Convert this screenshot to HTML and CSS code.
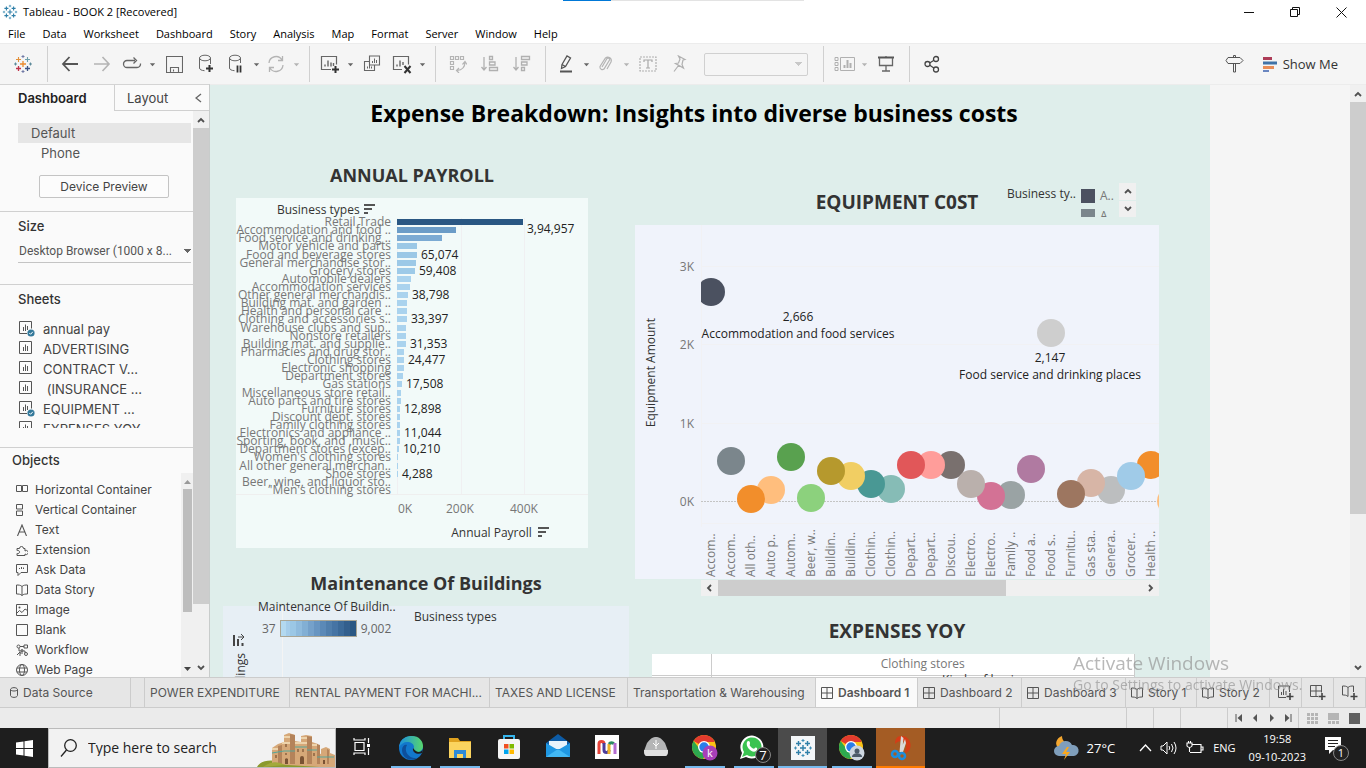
FILE: index.html
```html
<!DOCTYPE html>
<html lang="en">
<head>
<meta charset="utf-8">
<title>Tableau - BOOK 2 [Recovered]</title>
<link rel="stylesheet" href="styles.css">
</head>
<body>
<svg class="defs" aria-hidden="true">
  <symbol id="caret" viewBox="0 0 8 5"><path d="M1 1h6L4 4.500z" fill="currentColor"/></symbol>
  <symbol id="logo" viewBox="0 0 20 20">
    <path d="M10 7v6M7 10h6" stroke="#eb8a2d" stroke-width="1.300"/>
    <path d="M5.500 3v5M3 5.500h5" stroke="#e2903a" stroke-width="1.100"/><path d="M14.500 3v5M12 5.500h5" stroke="#6fa0aa" stroke-width="1.100"/>
    <path d="M5.500 12v5M3 14.500h5" stroke="#c0344b" stroke-width="1.300"/><path d="M14.500 12v5M12 14.500h5" stroke="#3e5484" stroke-width="1.300"/>
    <path d="M10 1v3M8.500 2.500h3M10 16v3M8.500 17.500h3" stroke="#7079a5"/><path d="M2.500 8.500v3M1 10h3M17.500 8.500v3M16 10h3" stroke="#5c8a9a"/>
  </symbol>
  <symbol id="logo-blue" viewBox="0 0 20 20">
    <path d="M10 7v6M7 10h6M5.500 3v5M3 5.500h5M14.500 3v5M12 5.500h5M5.500 12v5M3 14.500h5M14.500 12v5M12 14.500h5" stroke="#2f7fa8" stroke-width="1.400"/>
    <path d="M10 1v3M8.500 2.500h3M10 16v3M8.500 17.500h3M2.500 8.500v3M1 10h3M17.500 8.500v3M16 10h3" stroke="#3f8fb5"/>
  </symbol>
  <symbol id="sheet" viewBox="0 0 16 16"><path d="M.5 .5h12v12h-12zM4.500 6v4M6.500 3.500v6.500M8.500 5v5" fill="none" stroke="#555"/></symbol>
  <symbol id="sheet-used" viewBox="0 0 16 16"><path d="M8 12.500H.5V.5h12v7M4.500 6v4M6.500 3.500v6.500M8.500 5v4" fill="none" stroke="#555"/><circle cx="12" cy="12" r="3.600" fill="#33789a"/><path d="M10.300 12l1.300 1.300 2.200-2.500" fill="none" stroke="#fff"/></symbol>
  <symbol id="dash" viewBox="0 0 12 12"><path d="M.5 .5h11v11h-11zM.5 6h11M6 .5v11" fill="none" stroke="#555"/></symbol>
  <symbol id="book" viewBox="0 0 12 12"><path d="M6 2.500C4.500 1 2.500 1 .5 1v9c2 0 4 0 5.500 1.500C7.500 10 9.500 10 11.500 10V1c-2 0-4 0-5.500 1.500zM6 2.500v9" fill="none" stroke="#555"/></symbol>
  <symbol id="sort" viewBox="0 0 11 11"><path d="M0 1h11M0 5h8M0 9h4" stroke="#555" stroke-width="2"/></symbol>
  <symbol id="chev-up" viewBox="0 0 8 6"><path d="M1 5l3-3 3 3" fill="none" stroke="#505050" stroke-width="1.800"/></symbol>
  <symbol id="chev-down" viewBox="0 0 8 6"><path d="M1 1l3 3 3-3" fill="none" stroke="#505050" stroke-width="1.800"/></symbol>
  <symbol id="chrome" viewBox="0 0 28 28"><circle cx="13" cy="13" r="12" fill="#fbc116"/><path d="M13 13L2.600 7A12 12 0 0 1 23.400 7L23 8H13z" fill="#e33b2e"/><path d="M2.600 7A12 12 0 0 0 12 25l5-9-8-.5z" fill="#2da94f"/><circle cx="13" cy="13" r="6" fill="#fff"/><circle cx="13" cy="13" r="4.700" fill="#2b7de9"/></symbol>
</svg>

<header class="titlebar">
  <svg class="app-icon" viewBox="0 0 20 20"><use href="#logo-blue"/></svg>
  <span>Tableau - BOOK 2 [Recovered]</span>
  <div class="progress"><i></i></div>
  <div class="win-buttons">
    <button aria-label="Minimize"><svg width="11" height="11"><path d="M0 5.500h10" stroke="#111"/></svg></button>
    <button aria-label="Restore"><svg width="11" height="11"><path d="M.5 2.500h7v7h-7zM2.500 2.500v-2h7v7h-2" fill="none" stroke="#111"/></svg></button>
    <button aria-label="Close"><svg width="11" height="11"><path d="M.5 .5l10 10M10.500 .5l-10 10" stroke="#111"/></svg></button>
  </div>
</header>
<nav class="menubar"><a href="#">File</a><a href="#">Data</a><a href="#">Worksheet</a><a href="#">Dashboard</a><a href="#">Story</a><a href="#">Analysis</a><a href="#">Map</a><a href="#">Format</a><a href="#">Server</a><a href="#">Window</a><a href="#">Help</a></nav>

<div class="toolbar">
  <div class="group first"><button aria-label="Start page"><svg width="20" height="20"><use href="#logo"/></svg></button></div>
  <div class="group">
    <button aria-label="Undo"><svg width="18" height="16"><path d="M8.500 1L2 8l6.500 7M2 8h15" fill="none" stroke="#555" stroke-width="1.800"/></svg></button>
    <button aria-label="Redo"><svg width="18" height="16"><path d="M9.500 1L16 8l-6.500 7M16 8H1" fill="none" stroke="#b4b4b4" stroke-width="1.600"/></svg></button>
    <button class="with-menu" aria-label="Replay"><svg width="20" height="14"><path d="M13 3.500H5a3.500 3.500 0 0 0 0 7h10a3.500 3.500 0 0 0 3.500-4M11.500 .5l3 3-3 3" fill="none" stroke="#666" stroke-width="1.300"/></svg></button><button class="menu" aria-label="Replay options"><svg><use href="#caret"/></svg></button>
    <button aria-label="Save"><svg width="17" height="17"><path d="M.5 .5h16v16H.5zM4.500 16v-4.500h8V16M7.500 13.500v2" fill="none" stroke="#666" stroke-width="1.100"/></svg></button>
    <button aria-label="New data source"><svg width="18" height="20"><ellipse cx="8" cy="4" rx="5.500" ry="2.800" fill="none" stroke="#666"/><path d="M2.500 4v10c0 1.500 2 2.500 5 2.700M13.500 4v6" fill="none" stroke="#666"/><path d="M12.500 11v7M9 14.500h7" stroke="#333" stroke-width="2"/></svg></button>
    <button class="with-menu" aria-label="Pause updates"><svg width="18" height="20"><ellipse cx="8" cy="4" rx="5.500" ry="2.800" fill="none" stroke="#666"/><path d="M2.500 4v10c0 1.500 2 2.500 5 2.700M13.500 4v5" fill="none" stroke="#666"/><path d="M10.500 11.500v7M13.500 11.500v7" stroke="#333" stroke-width="1.800"/></svg></button><button class="menu" aria-label="Pause options"><svg><use href="#caret"/></svg></button>
    <button class="with-menu" aria-label="Refresh"><svg width="18" height="18"><path d="M2 8a7 7 0 0 1 13-3M16 10a7 7 0 0 1-13 3M15.500 1v4.500H11M2.500 17v-4.500H7" fill="none" stroke="#b4b4b4" stroke-width="1.300"/></svg></button><button class="menu dim" aria-label="Refresh options"><svg><use href="#caret"/></svg></button>
  </div>
  <div class="group">
    <button class="with-menu" aria-label="New worksheet"><svg width="20" height="20"><path d="M11 15.500H1.500v-13h15v8" fill="none" stroke="#666" stroke-width="1.200"/><path d="M5 12.500v-2M8 12.500v-6M11 12.500v-4M13.500 12v-3" stroke="#666" stroke-width="1.400"/><path d="M15.500 12v7M12 15.500h7" stroke="#333" stroke-width="2"/></svg></button><button class="menu" aria-label="New options"><svg><use href="#caret"/></svg></button>
    <button aria-label="Duplicate"><svg width="18" height="18"><path d="M6.500 1h10v9h-10zM6 6.500H1.500v9h10V10" fill="none" stroke="#666" stroke-width="1.100"/><path d="M9.500 8V6M11.500 8V3.500M13.500 8V5M4.500 13.500v-2M6.500 13.500V9M8.500 13.500v-2" stroke="#666"/></svg></button>
    <button class="with-menu" aria-label="Clear"><svg width="20" height="20"><path d="M10 15.500H1.500v-13h15v8" fill="none" stroke="#666" stroke-width="1.200"/><path d="M5 12.500v-2M8 12.500v-6M11 11v-3" stroke="#666" stroke-width="1.400"/><path d="M12.500 12l6 7M18.500 12l-6 7" stroke="#333" stroke-width="2"/></svg></button><button class="menu" aria-label="Clear options"><svg><use href="#caret"/></svg></button>
  </div>
  <div class="group">
    <button aria-label="Swap"><svg width="18" height="18"><path d="M1.500 1.500h3v3h-3zM6.500 1.500h3v3h-3zM11.500 1.500h3v3h-3zM1.500 6.500h3v3h-3zM1.500 11.500h3v3h-3zM16 7c0 5-3 8-8 8.500M13.500 9.500L16 6.500l2 3M10 13l-2.500 2.500L10 18" fill="none" stroke="#b4b4b4" stroke-width="1.200"/></svg></button>
    <button aria-label="Sort ascending"><svg width="18" height="18"><path d="M3 2v13M.5 12L3 15l2.500-3M8.500 1.500h3v3h-3zM8.500 7h5.500v3H8.500zM8.500 12.500h8v3h-8z" fill="none" stroke="#b0b0b0" stroke-width="1.300"/></svg></button>
    <button aria-label="Sort descending"><svg width="18" height="18"><path d="M3 2v13M.5 12L3 15l2.500-3M8.500 1.500h8v3h-8zM8.500 7h5.500v3H8.500zM8.500 12.500h3v3h-3z" fill="none" stroke="#b0b0b0" stroke-width="1.300"/></svg></button>
  </div>
  <div class="group">
    <button class="with-menu" aria-label="Highlight"><svg width="16" height="20"><path d="M4 10.500L9 2l3.500 2-5 8.500-4 2zM4 10.500l3.500 2" fill="none" stroke="#555" stroke-width="1.300"/><path d="M2 17.500h12" stroke="#555" stroke-width="2"/></svg></button><button class="menu" aria-label="Highlight options"><svg><use href="#caret"/></svg></button>
    <button class="with-menu" aria-label="Group"><svg width="16" height="18"><path d="M4 12l5-8.500a1.500 1.500 0 0 1 2.500 1.500L6 14a2.500 2.500 0 0 1-4-2.500L7.500 3A3.500 3.500 0 0 1 13 7l-4 7" fill="none" stroke="#b4b4b4" stroke-width="1.200"/></svg></button><button class="menu dim" aria-label="Group options"><svg><use href="#caret"/></svg></button>
    <button aria-label="Show mark labels"><svg width="18" height="16"><path d="M1 1h16v14H1z" fill="none" stroke="#b0b0b0" stroke-width="1.200" stroke-dasharray="2 1"/><path d="M5 6V4h8v2M9 4v8M7 12h4" fill="none" stroke="#a8a8a8" stroke-width="1.200"/></svg></button>
    <button aria-label="Fix axes"><svg width="16" height="18"><path d="M6.500 1l6.500 3.500-2 .5-1 4.500 1.500 3.500-8-4.500 3-.5 1.500-4zM6.500 10.500L2 16.500" fill="none" stroke="#b0b0b0" stroke-width="1.200"/></svg></button>
    <select class="fit" aria-label="Fit"></select>
  </div>
  <div class="group">
    <button class="with-menu" aria-label="Show cards"><svg width="21" height="16"><path d="M1 1.500h3v3H1zM1 6.500h3v3H1zM1 11.500h3v3H1zM6.500 1.500h14v13h-14z" fill="none" stroke="#b0b0b0"/><path d="M10.500 12V9M13.500 12V4M16.500 12V7" stroke="#b0b0b0" stroke-width="2"/></svg></button><button class="menu dim" aria-label="Card options"><svg><use href="#caret"/></svg></button>
    <button aria-label="Presentation mode"><svg width="18" height="18"><path d="M1 2.500h16" stroke="#555" stroke-width="2"/><path d="M2.500 2.500v8h13v-8M9 1v1M9 10.500v5M5 16h8" fill="none" stroke="#666" stroke-width="1.300"/></svg></button>
  </div>
  <div class="group last">
    <button aria-label="Share"><svg width="16" height="18"><path d="M4 9l8-5M4 9l8 5.500" stroke="#444" stroke-width="1.200"/><g fill="#f5f5f5" stroke="#444" stroke-width="1.300"><circle cx="3.500" cy="9" r="2.500"/><circle cx="12" cy="4" r="2.500"/><circle cx="12" cy="14.500" r="2.500"/></g></svg></button>
  </div>
  <div class="show-me">
    <button aria-label="Guide"><svg width="20" height="20"><path d="M3 3.500h12l3 3-3 3H3l-2-3zM8.500 9.500V18h2V9.500M8.500 3.500v-2h2v2" fill="none" stroke="#555"/></svg></button>
    <button class="label"><svg width="15" height="16"><path d="M0 2.500h9" stroke="#ad3c57" stroke-width="3"/><path d="M0 7h14" stroke="#4174a8" stroke-width="3"/><path d="M0 11.500h11" stroke="#e88d57" stroke-width="3"/><path d="M0 15h6" stroke="#6a86c0" stroke-width="2"/></svg>Show Me</button>
  </div>
</div>

<main class="workspace">
  <aside class="side">
    <div class="side-tabs"><button class="on">Dashboard</button><button class="off">Layout<svg width="7" height="10"><path d="M6 1L1 5l5 4" fill="none" stroke="#666" stroke-width="1.400"/></svg></button></div>
    <div class="side-body">
      <div class="side-main">
        <section class="devices">
          <ul><li class="chosen">Default</li><li class="sub">Phone</li></ul>
          <button>Device Preview</button>
        </section>
        <section class="size">
          <h3><label for="size">Size</label></h3>
          <select id="size"><option>Desktop Browser (1000 x 8...</option></select>
        </section>
        <section class="sheets">
          <h3>Sheets</h3>
          <ul>
            <li><svg><use href="#sheet-used"/></svg>annual pay</li>
            <li><svg><use href="#sheet"/></svg>ADVERTISING</li>
            <li><svg><use href="#sheet"/></svg>CONTRACT V...</li>
            <li><svg><use href="#sheet"/></svg>&nbsp;(INSURANCE ...</li>
            <li><svg><use href="#sheet-used"/></svg>EQUIPMENT ...</li>
            <li><svg><use href="#sheet"/></svg>EXPENSES YOY</li>
          </ul>
        </section>
        <section class="objects">
          <h3>Objects</h3>
          <div class="object-scroll">
            <ul>
              <li><svg><path d="M.5 1.500h5v6h-5zM6.500 1.500h5v6h-5z" fill="none" stroke="#555"/></svg>Horizontal Container</li>
              <li><svg><path d="M.5 .5h6v4.500h-6zM.5 7h6v4.500h-6z" fill="none" stroke="#555"/></svg>Vertical Container</li>
              <li><svg><path d="M1.500 12L6 1l4.500 11M3 8h6" fill="none" stroke="#555" stroke-width="1.100"/></svg>Text</li>
              <li><svg><path d="M1 4.500h2.500a2 2 0 1 1 4 0H9v2.500a2 2 0 1 1 0 3v1.500H1v-2a1.700 1.700 0 1 0 0-3z" fill="none" stroke="#555"/></svg>Extension</li>
              <li><svg><path d="M.5 .5h11v8H5l-3 3v-3H.5zM3.500 5V4M5.500 5V3M7.500 5V3.500" fill="none" stroke="#555"/></svg>Ask Data</li>
              <li><svg><use href="#book"/></svg>Data Story</li>
              <li><svg><path d="M.5 .5h11v11H.500zM.5 9.500l3-3 2.500 2 3-3.500 2.500 1.500" fill="none" stroke="#555"/><circle cx="3.500" cy="3.500" r="1" fill="#555"/></svg>Image</li>
              <li><svg><path d="M.5 .5h11v11H.500z" fill="none" stroke="#555"/></svg>Blank</li>
              <li><svg><path d="M4 2.500h4M4 9h3M3 4v3h6v2M1 11l3-3v4" fill="none" stroke="#555"/><g fill="none" stroke="#555"><circle cx="2.500" cy="2.500" r="1.500"/><path d="M8 1h3.500v3H8z"/><circle cx="10" cy="10" r="1.500"/><circle cx="6" cy="6.500" r="1"/></g></svg>Workflow</li>
              <li><svg><g fill="none" stroke="#555"><circle cx="6" cy="6" r="5.500"/><ellipse cx="6" cy="6" rx="2.500" ry="5.500"/><path d="M1 4h10M1 8h10"/></g></svg>Web Page</li>
            </ul>
            <div class="mini-scroll"><svg class="tri"><path d="M0 4l3.500-4L7 4z" fill="#999"/></svg><i></i><svg class="tri"><path d="M0 0h7L3.500 4z" fill="#444"/></svg></div>
          </div>
        </section>
      </div>
      <div class="scroll side-scroll"><svg><use href="#chev-up"/></svg><i></i><svg><use href="#chev-down"/></svg></div>
    </div>
  </aside>

  <div class="canvas">
    <div class="dashboard">
      <h1>Expense Breakdown: Insights into diverse business costs</h1>
      <div class="columns">
        <div class="left">
          <section class="payroll">
            <h2>ANNUAL PAYROLL</h2>
            <div class="card">
              <div class="head">Business types <svg><use href="#sort"/></svg></div>
              <ul class="bars">
                <li><span>Retail Trade</span><i style="width:126px;background:#2a5783"></i><b class="low">3,94,957</b></li>
                <li><span>Accommodation and food ..</span><i style="width:59px;background:#6b9cc7"></i></li>
                <li><span>Food service and drinking ..</span><i style="width:45px;background:#7baad3"></i></li>
                <li><span>Motor vehicle and parts</span><i style="width:20px;background:#9bc8e6"></i></li>
                <li><span>Food and beverage stores</span><i style="width:20px;background:#9bc8e6"></i><b>65,074</b></li>
                <li><span>General merchandise stor..</span><i style="width:19px;background:#9cc9e7"></i></li>
                <li><span>Grocery stores</span><i style="width:18px;background:#9dcae8"></i><b>59,408</b></li>
                <li><span>Automobile dealers</span><i style="width:14px"></i></li>
                <li><span>Accommodation services</span><i style="width:13px"></i></li>
                <li><span>Other general merchandis..</span><i style="width:11px"></i><b>38,798</b></li>
                <li><span>Building mat. and garden ..</span><i style="width:10px"></i></li>
                <li><span>Health and personal care ..</span><i style="width:10px"></i></li>
                <li><span>Clothing and accessories s..</span><i style="width:10px"></i><b>33,397</b></li>
                <li><span>Warehouse clubs and sup..</span><i style="width:9px"></i></li>
                <li><span>Nonstore retailers</span><i style="width:9px"></i></li>
                <li><span>Building mat. and supplie..</span><i style="width:9px"></i><b>31,353</b></li>
                <li><span>Pharmacies and drug stor..</span><i style="width:7px"></i></li>
                <li><span>Clothing stores</span><i style="width:7px"></i><b>24,477</b></li>
                <li><span>Electronic shopping</span><i style="width:7px"></i></li>
                <li><span>Department stores</span><i style="width:6px"></i></li>
                <li><span>Gas stations</span><i style="width:5px"></i><b>17,508</b></li>
                <li><span>Miscellaneous store retail..</span><i style="width:4px"></i></li>
                <li><span>Auto parts and tire stores</span><i style="width:4px"></i></li>
                <li><span>Furniture stores</span><i style="width:3px"></i><b>12,898</b></li>
                <li><span>Discount dept. stores</span><i style="width:3px"></i></li>
                <li><span>Family clothing stores</span><i style="width:3px"></i></li>
                <li><span>Electronics and appliance ..</span><i style="width:3px"></i><b>11,044</b></li>
                <li><span>Sporting, book, and ,music..</span><i style="width:3px"></i></li>
                <li><span>Department stores (excep..</span><i style="width:2px"></i><b>10,210</b></li>
                <li><span>Women's clothing stores</span><i style="width:1px"></i></li>
                <li><span>All other general merchan..</span><i style="width:1px"></i></li>
                <li><span>Shoe stores</span><i style="width:1px"></i><b>4,288</b></li>
                <li><span>Beer, wine, and liquor sto..</span></li>
                <li><span>'Men's clothing stores</span></li>
              </ul>
              <div class="ticks"><span>0K</span><span>200K</span><span>400K</span></div>
              <div class="axis">Annual Payroll <svg><use href="#sort"/></svg></div>
            </div>
          </section>
          <section class="maintenance">
            <h2>Maintenance Of Buildings</h2>
            <div class="card">
              <div class="axis-strip"><svg width="12" height="12"><path d="M1 1v11M5 5v7M9.500 9v3" stroke="#444" stroke-width="2"/><path d="M5 3h6M8 0l3 3-3 3" fill="none" stroke="#444"/></svg><span>Maintenance Of Buildings</span></div>
              <div class="plot-area"></div>
              <div class="color-legend">
                <div class="name">Maintenance Of Buildin..</div>
                <div class="ramp"><span>37</span><i></i><span>9,002</span></div>
              </div>
              <div class="type-legend">Business types</div>
            </div>
          </section>
        </div>

        <div class="right">
          <section class="equipment">
            <h2>EQUIPMENT C0ST</h2>
            <div class="types">
              <span class="name">Business ty..</span>
              <ul><li><i class="c1"></i>A..</li><li><i class="c2"></i>A</li></ul>
              <div class="spin"><button aria-label="Up"><svg><use href="#chev-up"/></svg></button><button aria-label="Down"><svg><use href="#chev-down"/></svg></button></div>
            </div>
            <div class="card">
              <div class="y-title"><span>Equipment Amount</span></div>
              <div class="y-ticks"><span>3K</span><span>2K</span><span>1K</span><span>0K</span></div>
              <div class="plot">
                <svg class="marks">
                  <g stroke="#f1f1f4"><path d="M.5 0v302"/><path d="M0 41.500h2000M0 119.500h2000M0 198.500h2000M0 298.500h2000"/></g>
                  <path d="M0 276.500h2000" stroke="#c4c4c4" stroke-dasharray="2 1"/>
                  <circle cx="470" cy="276" r="14" fill="#ffbe7d"/>
                  <circle cx="450" cy="240" r="14" fill="#f28e2b"/>
                  <circle cx="410" cy="265" r="14" fill="#bcbebf"/>
                  <circle cx="430" cy="251" r="14" fill="#a0cbe8"/>
                  <circle cx="390" cy="258" r="14" fill="#d7b5a6"/>
                  <circle cx="370" cy="269" r="14" fill="#9d7660"/>
                  <circle cx="350" cy="108" r="14" fill="#cecece"/>
                  <circle cx="330" cy="244" r="14" fill="#b07aa1"/>
                  <circle cx="310" cy="270" r="14" fill="#9aa3a4"/>
                  <circle cx="290" cy="271" r="14" fill="#d37295"/>
                  <circle cx="250" cy="240" r="14" fill="#79706e"/>
                  <circle cx="270" cy="259" r="14" fill="#bab0ac"/>
                  <circle cx="230" cy="240" r="14" fill="#ff9d9a"/>
                  <circle cx="210" cy="240" r="14" fill="#e15759"/>
                  <circle cx="190" cy="264" r="14" fill="#86bcb6"/>
                  <circle cx="170" cy="259" r="14" fill="#499894"/>
                  <circle cx="150" cy="251" r="14" fill="#f1ce63"/>
                  <circle cx="130" cy="246" r="14" fill="#b6992d"/>
                  <circle cx="110" cy="273" r="14" fill="#8cd17d"/>
                  <circle cx="90" cy="232" r="14" fill="#59a14f"/>
                  <circle cx="70" cy="265" r="14" fill="#ffbe7d"/>
                  <circle cx="50" cy="274" r="14" fill="#f28e2b"/>
                  <circle cx="30" cy="236" r="14" fill="#7b868c"/>
                  <circle cx="10" cy="67" r="14" fill="#4b5160"/>
                  <g text-anchor="middle"><text x="97" y="96">2,666</text><text x="97" y="113">Accommodation and food services</text><text x="349" y="137">2,147</text><text x="349" y="154">Food service and drinking places</text></g>
                </svg>
                <ul class="x-labels"><li>Accom..</li><li>Accom..</li><li>All oth..</li><li>Auto p..</li><li>Autom..</li><li>Beer, w..</li><li>Buildin..</li><li>Buildin..</li><li>Clothin..</li><li>Clothin..</li><li>Depart..</li><li>Depart..</li><li>Discou..</li><li>Electro..</li><li>Electro..</li><li>Family ..</li><li>Food a..</li><li>Food s..</li><li>Furnitu..</li><li>Gas sta..</li><li>Genera..</li><li>Grocer..</li><li>Health ..</li></ul>
              </div>
            </div>
            <div class="h-scroll"><svg width="8" height="8"><path d="M6 1L3 4l3 3" fill="none" stroke="#505050" stroke-width="1.800"/></svg><i></i><svg width="8" height="8"><path d="M2 1l3 3-3 3" fill="none" stroke="#505050" stroke-width="1.800"/></svg></div>
          </section>
          <section class="yoy">
            <h2>EXPENSES YOY</h2>
            <table><tr><td></td><th>Clothing stores</th></tr><tr><td></td><th class="kind">Kinds of business</th></tr></table>
          </section>
        </div>
      </div>
    </div>
    <div class="scroll canvas-scroll"><svg><use href="#chev-up"/></svg><i></i><svg><use href="#chev-down"/></svg></div>
  </div>
  <div class="watermark"><div>Activate Windows</div><p>Go to Settings to activate Windows.</p></div>
</main>

<nav class="tabs">
  <button class="source"><svg width="8" height="11"><path d="M.5 2.500C1 0 7 0 7.500 2.500v6C7 11 1 11 .5 8.500zM.5 2.500C1 4.500 7 4.500 7.500 2.500" fill="none" stroke="#555"/></svg>Data Source</button>
  <span></span>
  <button>POWER EXPENDITURE</button>
  <button>RENTAL PAYMENT FOR MACHI...</button>
  <button>TAXES AND LICENSE</button>
  <button>Transportation &amp; Warehousing</button>
  <button class="active"><svg><use href="#dash"/></svg>Dashboard 1</button>
  <button><svg><use href="#dash"/></svg>Dashboard 2</button>
  <button><svg><use href="#dash"/></svg>Dashboard 3</button>
  <button><svg><use href="#book"/></svg>Story 1</button>
  <button><svg><use href="#book"/></svg>Story 2</button>
  <button class="new" aria-label="New worksheet"><svg viewBox="0 0 16 16"><path d="M8 12.500H.5V1h11v6M3.500 10V7M5.500 10V4M8 10V6" fill="none" stroke="#555"/><path d="M12 8v7M8.500 11.500h7" stroke="#444" stroke-width="1.600"/></svg></button>
  <button class="new" aria-label="New dashboard"><svg viewBox="0 0 16 16"><path d="M8 11.500H.5v-11h11v7M.5 6h11M6 .5v11" fill="none" stroke="#555"/><path d="M12 8v7M8.500 11.500h7" stroke="#444" stroke-width="1.600"/></svg></button>
  <button class="new" aria-label="New story"><svg viewBox="0 0 16 16"><path d="M6 11.500C4.500 10 2.500 10 .5 10V1c2 0 4 0 5.500 1.500C7.500 1 9.500 1 11.500 1v6M6 2.500v9" fill="none" stroke="#555"/><path d="M12 8v7M8.500 11.500h7" stroke="#444" stroke-width="1.600"/></svg></button>
</nav>
<div class="status">
  <span></span><span></span><span></span><span></span><span></span>
  <div class="nav">
    <button aria-label="First"><svg width="8" height="8"><path d="M1 0v8" stroke="#555"/><path d="M7 0v8L2.500 4z" fill="#555"/></svg></button>
    <button aria-label="Previous"><svg width="8" height="8"><path d="M6 0v8L2 4z" fill="#555"/></svg></button>
    <button aria-label="Next"><svg width="8" height="8"><path d="M2 0v8l4-4z" fill="#555"/></svg></button>
    <button aria-label="Last"><svg width="8" height="8"><path d="M7 0v8" stroke="#555"/><path d="M1 0v8l4.500-4z" fill="#555"/></svg></button>
  </div>
  <div class="views">
    <button aria-label="Grid view"><svg width="11" height="11"><path d="M0 1.500h11M0 5.500h11M0 9.500h11" stroke="#b5b5b5" stroke-width="3" stroke-dasharray="3 1"/></svg></button>
    <button aria-label="Filmstrip"><svg width="11" height="11"><path d="M0 0h11v7H0z" fill="#b5b5b5"/><path d="M0 9.500h11" stroke="#b5b5b5" stroke-width="3" stroke-dasharray="3 1"/></svg></button>
    <button aria-label="Tabs"><svg width="11" height="11"><path d="M0 0h11v11H0z" fill="#606060"/></svg></button>
  </div>
</div>

<footer class="taskbar">
  <button class="start" aria-label="Start"><svg width="17" height="17"><path d="M0 2.500l7.500-1V8H0zM8.500 1.300L17 0v8H8.500zM0 9h7.500v6.500L0 14.500zM8.500 9H17v8l-8.500-1.300z" fill="#fff"/></svg></button>
  <label class="search"><svg width="18" height="20"><circle cx="10.500" cy="7.500" r="5.800" fill="none" stroke="#222" stroke-width="1.300"/><path d="M6.500 12L1 18.500" stroke="#222" stroke-width="1.300"/></svg>
    <input type="text" placeholder="Type here to search" aria-label="Search">
    <svg class="castle" width="78" height="36" viewBox="0 0 78 36">
      <path d="M0 36c4-7 13-7 20-6l58 2v4z" fill="#8b9a2d"/>
      <path d="M15 33V17l6-4 6-2V4l5-2 6 2v6l6 1V5l5-1 6 1v6l6 2v9l3 1v-5l5-2 4 2v4l5 2v13z" fill="#d6a878"/>
      <path d="M33 3l5 1v29h-5zM50 5l5 1v27h-5zM60 13l3 1v19h-3zM21 15l4-1v19h-4zM70 18l2 1v14h-2z" fill="#b4835a"/>
      <path d="M27 6h6M44 7h6M15 18h6M25 12h8M38 12h12M55 14h5" stroke="#edd3ab" stroke-width="2"/>
      <path d="M15 22l12-2h11M38 16h12M50 19h10M60 26h17" fill="none" stroke="#57a69a" stroke-width="1.200"/>
      <path d="M28 33v-5a2 2 0 0 1 3 0v5zM43 33v-6a2 2 0 0 1 4 0v6zM66 33v-4h2v4z" fill="#7a5233"/>
      <path d="M19 27v-3M29 16v-3M41 21v-3M46 21v-3M57 25v-3M29 24v-2" stroke="#7a5233" stroke-width="1.200"/>
      <path d="M6 36c10-7 16-5 22-2" fill="#a3a93b"/>
    </svg>
  </label>
  <div class="apps">
    <button aria-label="Task view"><svg width="19" height="18"><path d="M3 4.500h9v8H3zM2 0v2h11V0M2 17v-2h11v2M16.500 0v5M16.500 10v7" fill="none" stroke="#fff" stroke-width="1.200"/><path d="M15 6h3v3h-3z" fill="#fff"/></svg></button>
    <button class="open" aria-label="Edge"><svg width="26" height="26"><defs><linearGradient id="edge" x1="0" x2="1"><stop offset="0" stop-color="#1b8fe0"/><stop offset="1" stop-color="#58d66c"/></linearGradient></defs><circle cx="13" cy="13" r="12" fill="#1277cc"/><path d="M1 12C2 3 9 1 14 1c7 0 11 5 11 10 0 4-3 6-6 6-2 0-4-1-4-2s1-1 1-3c0-3-3-5-7-5-3 0-6 2-8 5z" fill="url(#edge)"/><path d="M9 10c-4 7 3 14 10 13-7 4-15 0-15-8 0-4 3-6 5-5z" fill="#0d4f9c"/><path d="M15 13c-1 5 5 7 9 5l1-4c-1 3-6 5-10-1z" fill="#1e1e1e"/></svg></button>
    <button class="open" aria-label="File Explorer"><svg width="24" height="22"><path d="M1 1h9l2 3h11v16H1z" fill="#dfa21f"/><path d="M1 5h22v16H1z" fill="#fbd45f"/><path d="M6 21v-8h12v8h-3v-4H9v4z" fill="#2f8ad6"/></svg></button>
    <button aria-label="Store"><svg width="24" height="28"><path d="M7 8V3h10v5" fill="none" stroke="#36b5ec" stroke-width="2"/><rect x="1" y="6" width="22" height="20" rx="2" fill="#f5f5f5"/><path d="M7 11h4.500v4.500H7z" fill="#f05022"/><path d="M12.500 11H17v4.500h-4.500z" fill="#7fba00"/><path d="M7 16.500h4.500V21H7z" fill="#00a4ef"/><path d="M12.500 16.500H17V21h-4.500z" fill="#ffb900"/></svg></button>
    <button aria-label="Mail"><svg width="26" height="26"><path d="M1 9L13 0l12 9v14H1z" fill="#0d5ba5"/><path d="M4 7h18v8H4z" fill="#e8f3fb"/><path d="M1 9l12 7 12-7v14H1z" fill="#1f97e2"/><path d="M1 23l12-8 12 8z" fill="#42b8f4"/></svg></button>
    <button aria-label="Miro"><svg width="24" height="24"><path d="M0 0h24v24H0z" fill="#fff"/><g fill="none" stroke-width="3"><path d="M4 19V9a2.500 2.500 0 0 1 5 0" stroke="#e6443a"/><path d="M9 8v7a2.500 2.500 0 0 0 5 0" stroke="#4b3c9c"/><path d="M14 19V9" stroke="#ebb12a"/><path d="M14 9a3 3 0 0 1 5 0" stroke="#2b8b62"/><path d="M20 8v11" stroke="#b36bd0"/></g></svg></button>
    <button aria-label="USB"><svg width="26" height="22"><path d="M4 7q5-7 9-6 4-1 9 6l3 8q0 5-3 5H4q-3 0-3-5z" fill="#b4b5b6"/><path d="M1 14h24q0 6-3 6H4q-3 0-3-6z" fill="#e0e0e0"/><path d="M13 4v9M10 7l3 3 3-3" fill="none" stroke="#fff"/></svg></button>
    <button class="open" aria-label="Chrome"><svg width="28" height="28"><use href="#chrome"/><circle cx="19" cy="19" r="7.500" fill="#a83fb8"/><text x="19" y="23" text-anchor="middle" class="badge-text">k</text></svg></button>
    <button class="open" aria-label="WhatsApp"><svg width="34" height="30"><path d="M3 26l2-6A11.500 11.500 0 1 1 9 24z" fill="#fff"/><path d="M5 24l2-5a9.500 9.500 0 1 1 3 3z" fill="#3ac351"/><path d="M10 9c1-2 3-1 3 1s-1 2 1 4 3 2 4 1 3 0 2 2c-3 5-12-2-10-8z" fill="#fff"/><circle cx="26" cy="22" r="7.500" fill="#222" stroke="#888"/><text x="26" y="27" text-anchor="middle" class="count">7</text></svg></button>
    <button class="open current" aria-label="Tableau"><svg width="24" height="24"><path d="M0 0h24v24H0z" fill="#f3f6f8"/><use href="#logo-blue" x="2" y="2" width="20" height="20"/></svg></button>
    <button class="open" aria-label="Chrome profile"><svg width="28" height="28"><use href="#chrome"/><circle cx="19" cy="19" r="7.500" fill="#cdd6e0"/><circle cx="19" cy="17" r="2.500" fill="#4b5968"/><path d="M14 23c0-5 10-5 10 0z" fill="#4b5968"/></svg></button>
    <button class="open snip" aria-label="Snipping Tool"><svg width="24" height="26"><path d="M12 1c10-1 13 13 5 17-2-1 1-5 0-9S9 5 6 9c0-5 2-8 6-8z" fill="#d63c16"/><path d="M10.500 17L12 1l2.500 2-1.500 14zM11 17l5-13 1 4-3 9z" fill="#dadada"/><g fill="none" stroke="#1c8ede" stroke-width="2.500"><circle cx="6" cy="19" r="3"/><circle cx="13" cy="21" r="3"/></g></svg></button>
  </div>
  <div class="tray">
    <svg width="26" height="26"><path d="M8 1c0 5 4 8 9 7-1 5-7 8-12 5S2 3 8 1z" fill="#f3a62f"/><path d="M5 21a5 5 0 0 1 0-10 7 7 0 0 1 13-1 5.500 5.500 0 0 1 2 11z" fill="#7f9ebb"/><path d="M13 12l-5 7h4l-2 6 6-8h-4l3-5z" fill="#fba81c"/></svg>
    <span class="temp">27°C</span>
    <svg class="up" width="13" height="8"><path d="M1 7l5.500-6L12 7" fill="none" stroke="#fff" stroke-width="1.300"/></svg>
    <svg class="sound" width="18" height="14"><path d="M1 5h2l4-4v12L3 9H1zM9 5q1.500 2 0 4M11.500 3q3 4 0 8M14 1q4 6 0 12" fill="none" stroke="#fff"/></svg>
    <svg class="battery" width="18" height="14"><path d="M6 3.500h9v8H4M15.500 6H17v3h-1.500M1 2h5v3q-2.500 3-5 0zM2.500 0v2M4.500 0v2M3.500 6v5" fill="none" stroke="#fff" stroke-width="1.100"/></svg>
    <span class="lang">ENG</span>
    <div class="clock">19:58<br>09-10-2023</div>
    <svg class="notes" width="26" height="28"><path d="M1 3h16v13H9l-4 4v-4H1z" fill="#fff"/><path d="M4 6.500h10M4 9.500h10M4 12.500h7" stroke="#222"/><circle cx="17" cy="19" r="7.500" fill="#222" stroke="#888"/><text x="17" y="23" text-anchor="middle" class="count small">1</text></svg>
  </div>
</footer>
</body>
</html>
```

FILE: styles.css
```css
* { box-sizing: border-box; }
body {
  margin: 0;
  height: 100vh;
  display: flex;
  flex-direction: column;
  overflow: hidden;
  background: #f5f5f5;
  color: #333;
  font: 12px/16px "Open Sans", sans-serif;
}
button, select, input { margin: 0; padding: 0; border: 0; background: none; color: inherit; font: inherit; }
ul { margin: 0; padding: 0; list-style: none; }
h1, h2, h3, p { margin: 0; }
svg { flex: none; display: block; }
i, b { font-style: normal; font-weight: 400; }
.defs { position: absolute; width: 0; height: 0; }

.titlebar { position: relative; flex: none; display: flex; align-items: center; height: 24px; padding-left: 2px; background: #fff; color: #000; gap: 5px; font-size: 11px; }
.app-icon { width: 16px; height: 16px; }
.progress { position: absolute; top: 0; left: 0; right: 0; width: 241px; height: 1px; margin: 0 auto; background: #e3e3e3; }
.progress i { display: block; width: 20%; height: 1px; background: #0078d7; }
.win-buttons { display: flex; margin-left: auto; padding-right: 2px; }
.win-buttons button { width: 46px; height: 20px; display: grid; place-items: center; }

.menubar { flex: none; display: flex; align-items: center; gap: 17px; height: 19px; padding-left: 8px; background: #fff; font-size: 11px; }
.menubar a { color: #000; text-decoration: none; }

.toolbar { flex: none; display: flex; align-items: center; height: 41px; background: #f5f5f5; border-top: 1px solid #ececec; }
.group { display: flex; align-items: center; height: 36px; padding: 0 7px 0 6px; border-right: 1px solid #d0d0d0; }
.group.first { padding: 0 8px 0 7px; }
.group.last { border: 0; }
.group button { width: 32px; height: 28px; display: grid; place-items: center; }
.group .with-menu { width: 28px; }
.group .menu { width: 12px; color: #666; }
.group .menu.dim { color: #b4b4b4; }
.menu svg { width: 7px; height: 5px; }
.fit, .size select {
  appearance: none;
  background: linear-gradient(45deg, transparent 50%, var(--arrow) 0) no-repeat right calc(var(--inset) + 4px) center / 4px 4px, linear-gradient(-45deg, transparent 50%, var(--arrow) 0) no-repeat right var(--inset) center / 4px 4px;
}
.fit { --arrow: #c8c8c8; --inset: 5px; width: 104px; height: 23px; margin: 0 8px; border: 1px solid #d0d0d0; border-radius: 2px; }
.show-me { display: flex; align-items: center; gap: 18px; margin-left: auto; padding-right: 28px; font-size: 13px; }
.show-me .label { display: flex; align-items: center; gap: 5px; }

.workspace { position: relative; flex: 1; min-height: 0; display: flex; overflow: hidden; }
.side { flex: none; width: 210px; display: flex; flex-direction: column; background: #fafafa; border-top: 1px solid #d4d4d4; border-right: 1px solid #c8cccb; font-family: Inter, sans-serif; font-feature-settings: "calt" 0; color: #444; }
.side-tabs { flex: none; display: flex; height: 26px; font-size: 13px; }
.side-tabs button { text-align: left; }
.side-tabs .on { width: 114px; padding-left: 18px; font-weight: 600; color: #222; }
.side-tabs .off { flex: 1; display: flex; align-items: center; justify-content: space-between; padding: 0 7px 0 12px; border-left: 1px solid #d0d0d0; border-bottom: 1px solid #d0d0d0; }
.side-body { flex: 1; min-height: 0; display: flex; }
.side-main { flex: 1; min-width: 0; display: flex; flex-direction: column; }
.side section { border-bottom: 1px solid #d0d0d0; }
.side section h3 { font-size: 13px; font-weight: 500; line-height: 16px; color: #333; }
.devices { padding: 12px 2px 13px 18px; }
.devices li { height: 20px; line-height: 20px; padding-left: 13px; font-size: 13px; color: #555; }
.devices .chosen { background: #e6e6e6; }
.devices .sub { padding-left: 23px; }
.devices button { display: block; width: 130px; height: 23px; margin: 12px 0 0 21px; border: 1px solid #c4c4c4; border-radius: 2px; background: #fcfcfc; font-size: 12px; }
.size { padding: 6px 2px 21px 18px; }
.size select { --arrow: #666; --inset: 0px; width: 100%; height: 23px; margin-top: 6px; padding-left: 1px; border-bottom: 1px solid #c4c4c4; color: #555; font-family: Roboto, sans-serif; }
.sheets { padding: 6px 2px 19px 18px; }
.sheets ul { height: 109px; margin-top: 12px; overflow: hidden; }
.sheets li { display: flex; align-items: center; height: 20px; gap: 8px; padding-left: 1px; font-size: 13px; }
.sheets li svg { width: 16px; height: 16px; }
.side .objects { flex: 1; min-height: 0; display: flex; flex-direction: column; padding: 4px 0 0 12px; border: 0; }
.object-scroll { flex: 1; min-height: 0; display: flex; justify-content: space-between; margin-top: 5px; overflow: hidden; }
.object-scroll ul { padding-top: 7px; }
.object-scroll li { display: flex; align-items: center; gap: 7px; height: 20px; padding-left: 4px; }
.object-scroll li svg { width: 12px; height: 12px; }
.mini-scroll { width: 12px; display: flex; flex-direction: column; align-items: center; padding: 7px 0 6px; background: #f0f0f0; }
.mini-scroll i { width: 9px; height: 123px; margin: 5px 0 auto; background: #bdbdbd; }
.tri { width: 7px; height: 4px; }
.scroll { display: flex; flex-direction: column; align-items: center; width: 16px; padding: 6px 0; background: #f0f0f0; }
.scroll svg { width: 8px; height: 6px; }
.scroll i { width: 100%; margin: 5px 0 auto; background: #cdcdcd; }
.side-scroll i { height: 86%; }
.canvas-scroll i { height: 71%; }

.canvas { flex: 1; min-width: 0; display: flex; justify-content: space-between; background: #f5f5f5; border-top: 1px solid #ececec; }
.dashboard { flex: 0 1 1000px; overflow: hidden; padding: 0 51px 0 13px; background: #dfeeeb; }
h1 { height: 59px; padding-left: 6px; font-size: 23px; font-weight: 700; line-height: 56px; text-align: center; color: #000; white-space: nowrap; }
h2 { font-size: 18px; font-weight: 700; line-height: 46px; text-align: center; color: #333; }
.columns { display: grid; grid-template-columns: minmax(0, 406fr) minmax(0, 524fr); gap: 6px; }
.payroll { margin: 0 41px 0 13px; padding-top: 8px; }
.payroll .card { height: 350px; padding-top: 4px; background: #f2faf9; }
.head { display: flex; gap: 4px; padding-left: 41px; }
.head svg, .axis svg { width: 11px; height: 11px; margin-top: 2px; }
.bars { display: grid; grid-template-rows: repeat(34, 1fr); height: 277px; background: linear-gradient(#f0f0f2, #f0f0f2) 161px 0 / 1px 100% no-repeat, linear-gradient(#f0f0f2, #f0f0f2) 225px 0 / 1px 100% no-repeat, linear-gradient(#f0f0f2, #f0f0f2) 288px 0 / 1px 100% no-repeat; border-bottom: 1px solid #efefef; }
.bars li { display: flex; align-items: center; min-height: 0; }
.bars span { width: 155px; margin-right: 6px; display: flex; justify-content: flex-end; white-space: nowrap; color: #777; }
.bars i { height: 6px; background: #aad3ee; }
.bars b { margin-left: 4px; color: #222; }
.bars .low { align-self: flex-start; line-height: 22px; }
.ticks { display: flex; padding: 6px 0 0 162px; color: #777; }
.ticks span { width: 64px; }
.ticks span:first-child { width: 48px; }
.axis { display: flex; justify-content: center; gap: 6px; padding: 8px 0 0 176px; }
.maintenance { padding-top: 12px; }
.maintenance .card { position: relative; display: flex; height: 120px; background: #e7eff5; }
.axis-strip { width: 60px; padding: 28px 0 0 10px; border-right: 1px solid #f4f4f4; }
.axis-strip span { display: block; margin-top: 7px; writing-mode: vertical-rl; transform: rotate(180deg); white-space: nowrap; }
.color-legend { position: absolute; left: 35px; top: -7px; }
.ramp { display: flex; align-items: center; gap: 4px; margin-top: 5px; padding-left: 4px; color: #666; }
.ramp i { width: 77px; height: 17px; border: 1px solid #a9a594; background: linear-gradient(90deg, #b3d9f0 6%, #a5cdea 0 12%, #9bc7e5 0 20%, #8fbbdd 0 28%, #82afd4 0 36%, #75a1ca 0 44%, #6895c1 0 52%, #5b89b7 0 60%, #507eac 0 68%, #4674a4 0 76%, #3c6a99 0 84%, #335f8d 0 92%, #2a5783 0); }
.type-legend { position: absolute; left: 191px; top: 3px; }

.equipment { position: relative; padding-top: 35px; }
.right h2 { font-size: 19px; }
.types { position: absolute; top: 39px; right: 23px; display: flex; height: 34px; overflow: hidden; }
.types .name { padding-top: 3px; margin-right: 5px; }
.types ul { width: 38px; padding-top: 3px; color: #777; }
.types li { display: flex; align-items: center; gap: 5px; height: 20px; line-height: 18px; }
.types li i { width: 14px; height: 14px; }
.c1 { background: #4b5160; }
.c2 { background: #7b868c; }
.spin { display: flex; flex-direction: column; gap: 1px; }
.spin button { width: 17px; flex: 1; display: grid; place-items: center; background: #f0f0f0; }
.spin svg { width: 8px; height: 6px; }
.equipment .card { display: flex; height: 354px; background: #f0f3fb; }
.y-title { width: 32px; display: grid; place-items: center; padding-bottom: 58px; }
.y-title span { writing-mode: vertical-rl; transform: rotate(180deg); }
.y-ticks { width: 34px; display: flex; flex-direction: column; justify-content: space-between; align-items: flex-end; padding: 34px 7px 69px 0; color: #777; }
.plot { flex: 1; min-width: 0; overflow: hidden; }
.marks { width: 100%; height: 302px; }
.marks text { fill: #222; font-size: 12px; }
.x-labels { display: flex; height: 50px; color: #777; }
.x-labels li { flex: none; width: 20px; height: 50px; line-height: 20px; writing-mode: vertical-rl; transform: rotate(180deg); white-space: nowrap; }
.h-scroll { display: flex; align-items: center; height: 16px; margin: 1px 0 0 66px; padding: 0 4px; background: #f0f0f0; }
.h-scroll i { width: 288px; height: 16px; margin: 0 auto 0 5px; background: #cdcdcd; }
.yoy { padding-top: 12px; }
.yoy table { width: calc(100% - 41px); margin: 0 24px 0 17px; border-collapse: collapse; background: #fff; }
.yoy td { width: 59px; padding: 0; border-right: 1px solid #ccc; }
.yoy tr { height: 21px; border-bottom: 1px solid #ccc; }
.yoy th { padding: 0; font-weight: 400; color: #777; border-right: 1px solid #ccc; }
.yoy .kind { padding-left: 136px; color: #333; line-height: 8px; vertical-align: top; }

.watermark { position: fixed; left: 1073px; bottom: 74px; color: rgba(140, 140, 140, .62); pointer-events: none; }
.watermark div { font-size: 19px; line-height: 26px; }
.watermark p { font-size: 14px; line-height: 18px; }

.tabs { flex: none; display: grid; grid-template-columns: 131fr 14fr 145fr 200fr 138fr 188fr 102fr 104fr 104fr 71fr 73fr 32fr 32fr 32fr; height: 31px; background: #e6e6e6; border: 1px solid #ccc; border-width: 1px 0; font-family: Inter, sans-serif; color: #555; }
.tabs > * { display: flex; align-items: center; gap: 5px; min-width: 0; padding-left: 5px; border-right: 1px solid #ccc; white-space: nowrap; }
.tabs .source { padding-left: 10px; }
.tabs svg { width: 12px; height: 12px; }
.tabs .source svg { width: 8px; }
.tabs .active { background: #fafafa; font-weight: 600; }
.tabs .new { padding: 0; justify-content: center; }
.tabs .new svg { width: 16px; height: 16px; }
.status { flex: none; display: grid; grid-template-columns: 1000fr 127fr 27fr 27fr 47fr 71fr 67fr; height: 20px; background: #ebebeb; }
.status > * { border-right: 1px solid #ccc; }
.nav, .status .views { display: flex; align-items: center; justify-content: space-between; padding: 0 6px 0 7px; }
.status .views { border: 0; padding: 0 6px 0 8px; }

.taskbar { flex: none; display: flex; height: 40px; background: #1e1e1e; color: #fff; }
.start { width: 48px; display: grid; place-items: center; }
.search { display: flex; align-items: center; width: 288px; padding-left: 11px; background: #f2f2f2; border: 1px solid #bbb; color: #222; }
.search input { flex: 1; min-width: 0; padding-left: 10px; font-size: 14px; outline: 0; }
.search input::placeholder { color: #222; opacity: 1; }
.castle { align-self: flex-end; }
.apps { display: flex; padding-left: 1px; }
.apps button { width: 49px; display: grid; place-items: center; border-bottom: 2px solid transparent; }
.apps .open { background: linear-gradient(#76b9ed, #76b9ed) no-repeat center bottom / 40px 2px; border: 0; }
.apps .current { background: linear-gradient(#76b9ed, #76b9ed) no-repeat center bottom / 100% 2px, #4b4b4b; }
.apps .snip { background: linear-gradient(#ff7b00, #ff7b00) no-repeat center bottom / 100% 2px, #a45c24; }
.badge-text { fill: #fff; font-size: 11px; }
.count { fill: #fff; font-size: 13px; }
.count.small { font-size: 11px; }
.tray { display: flex; align-items: center; margin-left: auto; padding-right: 16px; }
.temp { margin: 0 24px 0 7px; font-size: 13px; }
.sound { margin: 0 8px; }
.lang { margin: 0 13px 0 9px; font-size: 11px; }
.clock { text-align: center; font-size: 11px; line-height: 18px; }
.notes { margin-left: 18px; }
```
